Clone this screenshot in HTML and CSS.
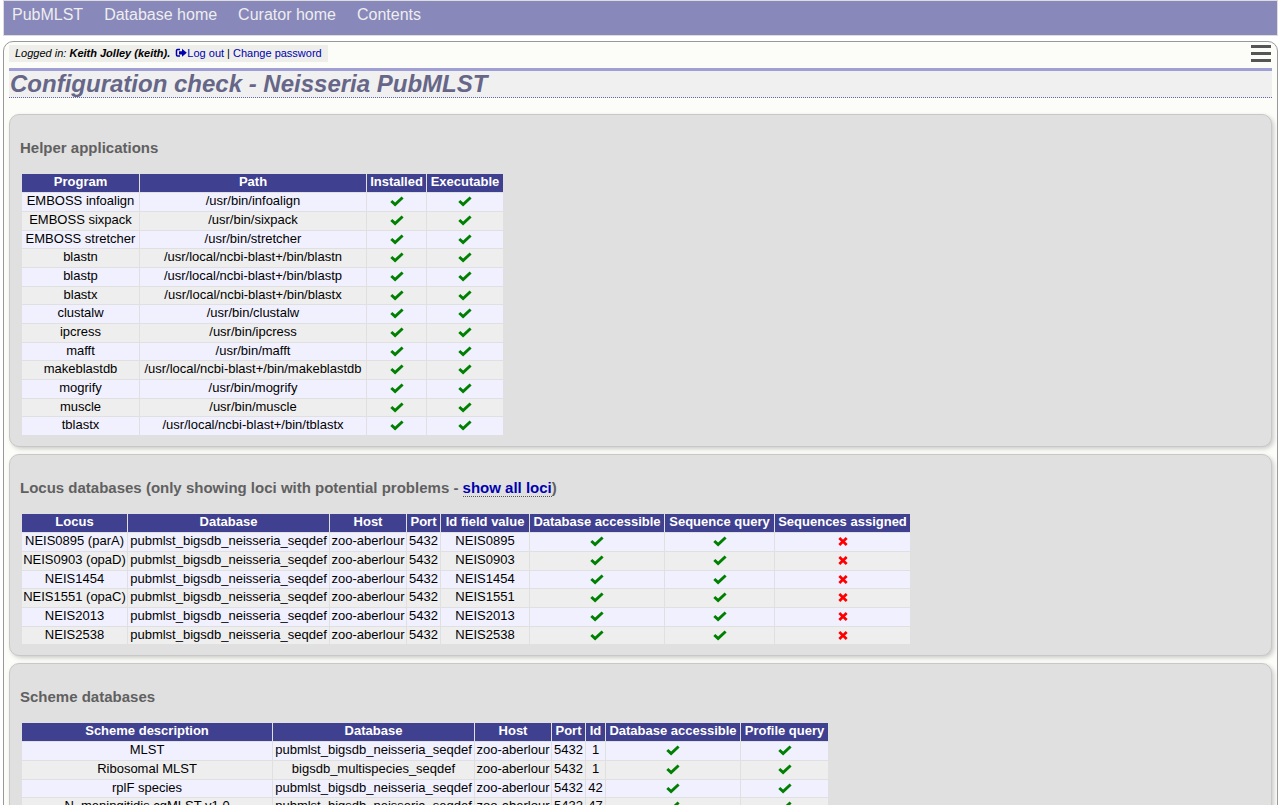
FILE: index.html
```
<!DOCTYPE html>
<html lang="en">
<head>
<meta charset="utf-8">
<title>Configuration check - Neisseria PubMLST</title>
<link rel="stylesheet" href="styles.css">
</head>
<body>
<svg class="sprite" aria-hidden="true">
  <symbol id="tick" viewBox="0 0 14 11"><path d="M.3 5.9 2.3 4 5.1 6.6 11.6.6 13.6 2.5 5.1 10.5Z" fill="#008000"/></symbol>
  <symbol id="cross" viewBox="0 0 10 9"><path d="M1.3 1 8.7 8M8.7 1 1.3 8" fill="none" stroke="#f00" stroke-width="2.7"/></symbol>
</svg>
<nav class="topbar">
  <a href="#">PubMLST</a>
  <a href="#">Database home</a>
  <a href="#">Curator home</a>
  <a href="#">Contents</a>
</nav>
<main class="page">
  <div class="userbar">
    <div class="login"><i>Logged in: <b>Keith Jolley (keith).</b></i> <a href="#"><svg class="exit" viewBox="0 0 12 10" aria-hidden="true"><path d="M5 1.5H2.5Q1.5 1.5 1.5 2.5V7Q1.5 8 2.5 8H5" fill="none" stroke="#0000b0" stroke-width="1.5"/><path d="M4 3.2H7V.8L11.8 4.8 7 8.8V6.4H4Z" fill="#0000b0"/></svg>Log out</a> | <a href="#">Change password</a></div>
    <button class="menu" type="button" aria-label="Menu"><span></span><span></span><span></span></button>
  </div>
  <h1>Configuration check - Neisseria PubMLST</h1>

  <section class="box">
    <h2>Helper applications</h2>
    <table class="results">
      <thead><tr><th class="w-program">Program</th><th class="w-path">Path</th><th class="w-installed">Installed</th><th class="w-exec">Executable</th></tr></thead>
      <tbody>
        <tr><td>EMBOSS infoalign</td><td>/usr/bin/infoalign</td><td><svg class="tick"><use href="#tick"/></svg></td><td><svg class="tick"><use href="#tick"/></svg></td></tr>
        <tr><td>EMBOSS sixpack</td><td>/usr/bin/sixpack</td><td><svg class="tick"><use href="#tick"/></svg></td><td><svg class="tick"><use href="#tick"/></svg></td></tr>
        <tr><td>EMBOSS stretcher</td><td>/usr/bin/stretcher</td><td><svg class="tick"><use href="#tick"/></svg></td><td><svg class="tick"><use href="#tick"/></svg></td></tr>
        <tr><td>blastn</td><td>/usr/local/ncbi-blast+/bin/blastn</td><td><svg class="tick"><use href="#tick"/></svg></td><td><svg class="tick"><use href="#tick"/></svg></td></tr>
        <tr><td>blastp</td><td>/usr/local/ncbi-blast+/bin/blastp</td><td><svg class="tick"><use href="#tick"/></svg></td><td><svg class="tick"><use href="#tick"/></svg></td></tr>
        <tr><td>blastx</td><td>/usr/local/ncbi-blast+/bin/blastx</td><td><svg class="tick"><use href="#tick"/></svg></td><td><svg class="tick"><use href="#tick"/></svg></td></tr>
        <tr><td>clustalw</td><td>/usr/bin/clustalw</td><td><svg class="tick"><use href="#tick"/></svg></td><td><svg class="tick"><use href="#tick"/></svg></td></tr>
        <tr><td>ipcress</td><td>/usr/bin/ipcress</td><td><svg class="tick"><use href="#tick"/></svg></td><td><svg class="tick"><use href="#tick"/></svg></td></tr>
        <tr><td>mafft</td><td>/usr/bin/mafft</td><td><svg class="tick"><use href="#tick"/></svg></td><td><svg class="tick"><use href="#tick"/></svg></td></tr>
        <tr><td>makeblastdb</td><td>/usr/local/ncbi-blast+/bin/makeblastdb</td><td><svg class="tick"><use href="#tick"/></svg></td><td><svg class="tick"><use href="#tick"/></svg></td></tr>
        <tr><td>mogrify</td><td>/usr/bin/mogrify</td><td><svg class="tick"><use href="#tick"/></svg></td><td><svg class="tick"><use href="#tick"/></svg></td></tr>
        <tr><td>muscle</td><td>/usr/bin/muscle</td><td><svg class="tick"><use href="#tick"/></svg></td><td><svg class="tick"><use href="#tick"/></svg></td></tr>
        <tr><td>tblastx</td><td>/usr/local/ncbi-blast+/bin/tblastx</td><td><svg class="tick"><use href="#tick"/></svg></td><td><svg class="tick"><use href="#tick"/></svg></td></tr>
      </tbody>
    </table>
  </section>

  <section class="box">
    <h2>Locus databases (only showing loci with potential problems - <a href="#">show all loci</a>)</h2>
    <table class="results">
      <thead><tr><th class="w-locus">Locus</th><th class="w-db">Database</th><th class="w-host">Host</th><th class="w-port">Port</th><th class="w-value">Id field value</th><th class="w-access">Database accessible</th><th class="w-seq">Sequence query</th><th class="w-assigned">Sequences assigned</th></tr></thead>
      <tbody>
        <tr><td>NEIS0895 (parA)</td><td>pubmlst_bigsdb_neisseria_seqdef</td><td>zoo-aberlour</td><td>5432</td><td>NEIS0895</td><td><svg class="tick"><use href="#tick"/></svg></td><td><svg class="tick"><use href="#tick"/></svg></td><td><svg class="cross"><use href="#cross"/></svg></td></tr>
        <tr><td>NEIS0903 (opaD)</td><td>pubmlst_bigsdb_neisseria_seqdef</td><td>zoo-aberlour</td><td>5432</td><td>NEIS0903</td><td><svg class="tick"><use href="#tick"/></svg></td><td><svg class="tick"><use href="#tick"/></svg></td><td><svg class="cross"><use href="#cross"/></svg></td></tr>
        <tr><td>NEIS1454</td><td>pubmlst_bigsdb_neisseria_seqdef</td><td>zoo-aberlour</td><td>5432</td><td>NEIS1454</td><td><svg class="tick"><use href="#tick"/></svg></td><td><svg class="tick"><use href="#tick"/></svg></td><td><svg class="cross"><use href="#cross"/></svg></td></tr>
        <tr><td>NEIS1551 (opaC)</td><td>pubmlst_bigsdb_neisseria_seqdef</td><td>zoo-aberlour</td><td>5432</td><td>NEIS1551</td><td><svg class="tick"><use href="#tick"/></svg></td><td><svg class="tick"><use href="#tick"/></svg></td><td><svg class="cross"><use href="#cross"/></svg></td></tr>
        <tr><td>NEIS2013</td><td>pubmlst_bigsdb_neisseria_seqdef</td><td>zoo-aberlour</td><td>5432</td><td>NEIS2013</td><td><svg class="tick"><use href="#tick"/></svg></td><td><svg class="tick"><use href="#tick"/></svg></td><td><svg class="cross"><use href="#cross"/></svg></td></tr>
        <tr><td>NEIS2538</td><td>pubmlst_bigsdb_neisseria_seqdef</td><td>zoo-aberlour</td><td>5432</td><td>NEIS2538</td><td><svg class="tick"><use href="#tick"/></svg></td><td><svg class="tick"><use href="#tick"/></svg></td><td><svg class="cross"><use href="#cross"/></svg></td></tr>
      </tbody>
    </table>
  </section>

  <section class="box">
    <h2>Scheme databases</h2>
    <table class="results">
      <thead><tr><th class="w-scheme">Scheme description</th><th class="w-db">Database</th><th class="w-host">Host</th><th class="w-port">Port</th><th class="w-id">Id</th><th class="w-access">Database accessible</th><th class="w-profile">Profile query</th></tr></thead>
      <tbody>
        <tr><td>MLST</td><td>pubmlst_bigsdb_neisseria_seqdef</td><td>zoo-aberlour</td><td>5432</td><td>1</td><td><svg class="tick"><use href="#tick"/></svg></td><td><svg class="tick"><use href="#tick"/></svg></td></tr>
        <tr><td>Ribosomal MLST</td><td>bigsdb_multispecies_seqdef</td><td>zoo-aberlour</td><td>5432</td><td>1</td><td><svg class="tick"><use href="#tick"/></svg></td><td><svg class="tick"><use href="#tick"/></svg></td></tr>
        <tr><td>rplF species</td><td>pubmlst_bigsdb_neisseria_seqdef</td><td>zoo-aberlour</td><td>5432</td><td>42</td><td><svg class="tick"><use href="#tick"/></svg></td><td><svg class="tick"><use href="#tick"/></svg></td></tr>
        <tr><td>N. meningitidis cgMLST v1.0</td><td>pubmlst_bigsdb_neisseria_seqdef</td><td>zoo-aberlour</td><td>5432</td><td>47</td><td><svg class="tick"><use href="#tick"/></svg></td><td><svg class="tick"><use href="#tick"/></svg></td></tr>
      </tbody>
    </table>
  </section>
</main>
</body>
</html>
```

FILE: styles.css
```
* { box-sizing: border-box; }
html { scrollbar-width: none; }
body {
  margin: 0 3px;
  background: #fff;
  color: #000;
  font-family: "Liberation Sans", Arial, sans-serif;
  font-size: 13px;
}
a { color: #0000b0; text-decoration: none; }
.sprite { display: none; }

.topbar {
  display: flex;
  gap: 21px;
  padding: 5px 8px 11px;
  border: 1px solid #ddd;
  background: #8888bb;
  font-size: 16px;
  line-height: 18px;
}
.topbar a { color: #eee; }

.page {
  margin-top: 5px;
  padding: 3px 5px 5px;
  border: 1px solid #999;
  border-radius: 10px;
  background: #fcfdf8;
}
.userbar {
  display: flex;
  justify-content: space-between;
  align-items: flex-start;
  padding-bottom: 6px;
}
.login {
  padding: 0 6px;
  background: #eeeeea;
  font-size: 11px;
  line-height: 17px;
}
.exit { width: 12px; height: 10px; margin-left: 2px; vertical-align: -1px; }
.menu {
  display: flex;
  flex-direction: column;
  gap: 4px;
  width: 21px;
  padding: 0 1px 0 0;
  border: 0;
  background: none;
}
.menu span { height: 3px; background: #555; }

h1 {
  margin: 0;
  padding-left: 1px;
  border-top: 3px solid #9f9fd5;
  border-bottom: 1px dotted #6666a0;
  background: #f0f0f0;
  color: #666688;
  font-size: 24px;
  font-style: italic;
  line-height: 26px;
}

.box {
  margin-top: 7px;
  padding: 23px 10px 10px;
  border: 1px solid #c8c8c8;
  border-radius: 10px;
  background: #e0e0e0;
  box-shadow: 2px 2px 4px #ccc;
}
h1 + .box { margin-top: 16px; }
h2 {
  margin: 0 0 15px;
  color: #606060;
  font-size: 15px;
  line-height: 20px;
}
h2 a { border-bottom: 1px dotted #555; }

.results { margin-left: 1px; border-spacing: 1px; white-space: nowrap; }
.results th, .results td {
  height: 18px;
  padding: 0;
  text-align: center;
  vertical-align: top;
  line-height: 16px;
}
.results th { background: #404090; color: #fff; }
.results td { background: #eee; }
.results tr:nth-child(odd) td { background: #f0f0ff; }
.results tr:nth-child(3n) td { height: 17px; }
.tick, .cross { display: block; margin: 3px auto 0; }
.tick { width: 14px; height: 11px; }
.cross { width: 10px; height: 9px; margin-top: 4px; }

.w-program { width: 117px; }
.w-path { width: 226px; }
.w-installed { width: 59px; }
.w-exec { width: 76px; }
.w-locus { width: 105px; }
.w-db { width: 201px; }
.w-host { width: 76px; }
.w-port { width: 33px; }
.w-value { width: 88px; }
.w-access { width: 134px; }
.w-seq { width: 109px; }
.w-assigned { width: 135px; }
.w-scheme { width: 250px; }
.w-id { width: 19px; }
.w-profile { width: 87px; }
```
